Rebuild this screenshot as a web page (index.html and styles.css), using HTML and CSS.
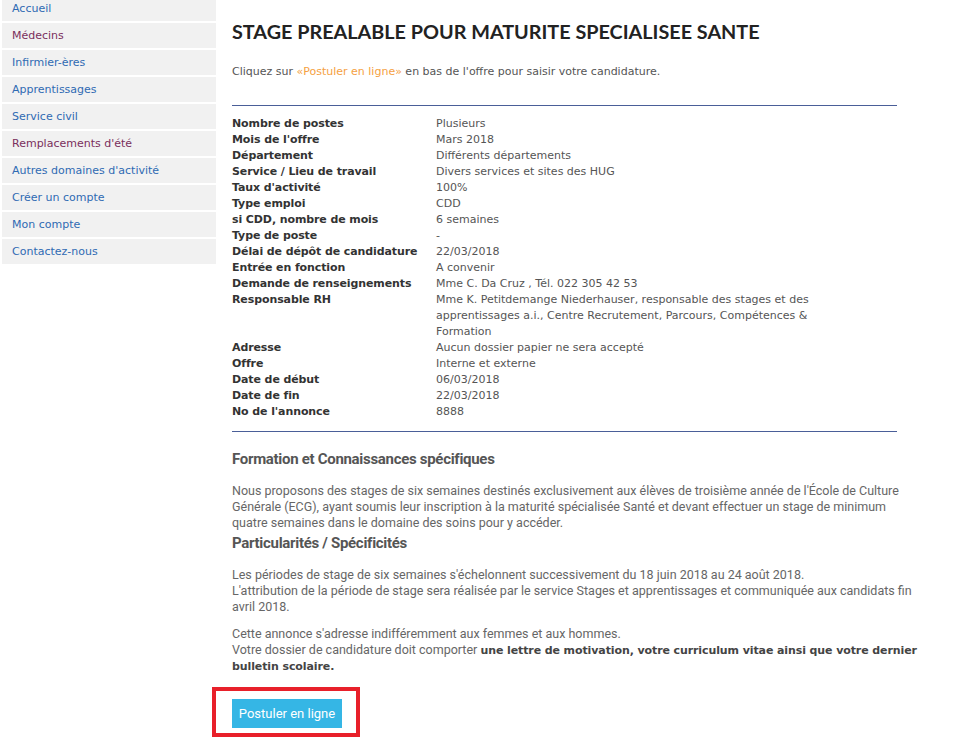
FILE: index.html
```html
<!DOCTYPE html>
<html lang="fr">
<head>
<meta charset="utf-8">
<title>Stage préalable pour maturité spécialisée santé</title>
<link rel="stylesheet" href="styles.css">
</head>
<body>
<div class="layout">
  <nav class="sidebar">
    <a class="nav-item" href="#">Accueil</a>
    <a class="nav-item visited" href="#">Médecins</a>
    <a class="nav-item" href="#">Infirmier-ères</a>
    <a class="nav-item" href="#">Apprentissages</a>
    <a class="nav-item" href="#">Service civil</a>
    <a class="nav-item visited" href="#">Remplacements d'été</a>
    <a class="nav-item" href="#">Autres domaines d'activité</a>
    <a class="nav-item" href="#">Créer un compte</a>
    <a class="nav-item" href="#">Mon compte</a>
    <a class="nav-item" href="#">Contactez-nous</a>
  </nav>
  <main class="content">
    <h1 class="title">STAGE PREALABLE POUR MATURITE SPECIALISEE SANTE</h1>
    <p class="intro">Cliquez sur <a class="apply-link" href="#">«Postuler en ligne»</a> en bas de l'offre pour saisir votre candidature.</p>
    <hr class="rule">
    <table class="details">
      <tr><th>Nombre de postes</th><td>Plusieurs</td></tr>
      <tr><th>Mois de l'offre</th><td>Mars 2018</td></tr>
      <tr><th>Département</th><td>Différents départements</td></tr>
      <tr><th>Service / Lieu de travail</th><td>Divers services et sites des HUG</td></tr>
      <tr><th>Taux d'activité</th><td>100%</td></tr>
      <tr><th>Type emploi</th><td>CDD</td></tr>
      <tr><th>si CDD, nombre de mois</th><td>6 semaines</td></tr>
      <tr><th>Type de poste</th><td>-</td></tr>
      <tr><th>Délai de dépôt de candidature</th><td>22/03/2018</td></tr>
      <tr><th>Entrée en fonction</th><td>A convenir</td></tr>
      <tr><th>Demande de renseignements</th><td>Mme C. Da Cruz , Tél. 022 305 42 53</td></tr>
      <tr><th>Responsable RH</th><td>Mme K. Petitdemange Niederhauser, responsable des stages et des apprentissages a.i., Centre Recrutement, Parcours, Compétences &amp; Formation</td></tr>
      <tr><th>Adresse</th><td>Aucun dossier papier ne sera accepté</td></tr>
      <tr><th>Offre</th><td>Interne et externe</td></tr>
      <tr><th>Date de début</th><td>06/03/2018</td></tr>
      <tr><th>Date de fin</th><td>22/03/2018</td></tr>
      <tr><th>No de l'annonce</th><td>8888</td></tr>
    </table>
    <hr class="rule rule-bottom">
    <h2 class="section-title">Formation et Connaissances spécifiques</h2>
    <p class="text">Nous proposons des stages de six semaines destinés exclusivement aux élèves de troisième année de l'École de Culture Générale (ECG), ayant soumis leur inscription à la maturité spécialisée Santé et devant effectuer un stage de minimum quatre semaines dans le domaine des soins pour y accéder.</p>
    <h2 class="section-title section-title-tight">Particularités / Spécificités</h2>
    <p class="text">Les périodes de stage de six semaines s'échelonnent successivement du 18 juin 2018 au 24 août 2018.<br>L'attribution de la période de stage sera réalisée par le service Stages et apprentissages et communiquée aux candidats fin avril 2018.</p>
    <p class="text text-close">Cette annonce s'adresse indifféremment aux femmes et aux hommes.<br>Votre dossier de candidature doit comporter <strong>une lettre de motivation, votre curriculum vitae ainsi que votre dernier bulletin scolaire.</strong></p>
    <div class="highlight">
      <a class="apply-btn" href="#">Postuler en ligne</a>
    </div>
  </main>
</div>
</body>
</html>
```

FILE: styles.css
```css
html, body {
  margin: 0;
  padding: 0;
  background: #ffffff;
}

body {
  font-family: "DejaVu Sans", Verdana, sans-serif;
  font-size: 11px;
  color: #555555;
  height: 737px;
  overflow: hidden;
}

.layout {
  display: flex;
  align-items: flex-start;
}

.sidebar {
  width: 214px;
  margin-left: 2px;
  margin-top: -4px;
  display: flex;
  flex-direction: column;
  flex-shrink: 0;
}

.nav-item {
  display: flex;
  align-items: center;
  height: 25px;
  padding-left: 10px;
  background: #f1f1f1;
  border-bottom: 2px solid #ffffff;
  color: #2f6ab3;
  text-decoration: none;
  font-size: 11px;
}

.nav-item:last-child {
  border-bottom: none;
}

.nav-item.visited {
  color: #7a2f5c;
}

.content {
  width: 688px;
  padding-left: 16px;
}

.title {
  font-family: Lato, "Open Sans", sans-serif;
  font-weight: 700;
  font-size: 19.8px;
  color: #222222;
  margin: 18px 0 0;
  line-height: 26px;
}

.intro {
  margin: 20px 0 0;
  line-height: 16px;
  color: #555555;
}

.apply-link {
  color: #f5a142;
  text-decoration: none;
}

.rule {
  width: 665px;
  border: none;
  border-top: 1px solid #4a5e98;
  margin: 25px 0 0;
  height: 0;
}

.details {
  border-collapse: collapse;
  margin-top: 10px;
  width: 665px;
}

.details th,
.details td {
  padding: 0;
  line-height: 16px;
  vertical-align: top;
  text-align: left;
}

.details th {
  width: 204px;
  font-weight: 700;
  letter-spacing: -0.1px;
  color: #333333;
}

.details td {
  color: #555555;
  padding-right: 40px;
}

.rule-bottom {
  margin-top: 11px;
}

.section-title {
  font-family: "Roboto", sans-serif;
  font-weight: 700;
  font-size: 15px;
  letter-spacing: -0.3px;
  color: #555555;
  margin: 18px 0 0;
  line-height: 18px;
}

.section-title-tight {
  margin-top: 3px;
}

.text {
  font-family: "Roboto", sans-serif;
  font-size: 12.5px;
  color: #666666;
  line-height: 16px;
  margin: 15px 0 0;
}

.text-close {
  margin-top: 11px;
}

.text strong {
  font-family: "DejaVu Sans", Verdana, sans-serif;
  font-size: 11px;
  line-height: 1;
  letter-spacing: -0.1px;
  color: #444444;
}

.highlight {
  width: fit-content;
  margin: 13px 0 0 -20px;
  padding: 8px 14px 5px 16px;
  border: 4px solid #e8202a;
}

.apply-btn {
  display: flex;
  align-items: center;
  justify-content: center;
  width: 110px;
  height: 29px;
  background: #35b6e5;
  color: #ffffff;
  text-decoration: none;
  font-family: "Roboto", sans-serif;
  font-size: 13px;
}
```
